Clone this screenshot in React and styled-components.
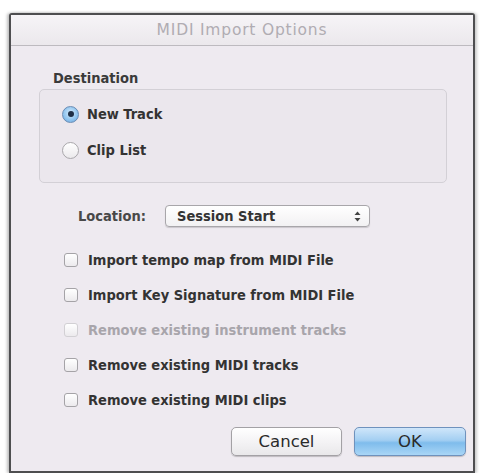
import React from "react";
import styled, { createGlobalStyle } from "styled-components";

const Global = createGlobalStyle`
  html, body { margin: 0; padding: 0; background: #ffffff; }
  body { font-family: "DejaVu Sans Condensed", "DejaVu Sans", sans-serif; }
`;

const Page = styled.div`
  padding: 13px 0 0 9px;
`;

const Window = styled.div`
  width: 462px;
  height: 456px;
  border: 2px solid #4e4e50;
  border-radius: 3px 3px 0 0;
  background: #eeeaf0;
  box-shadow: -2px 0 3px rgba(0,0,0,0.25), 2px 0 3px rgba(0,0,0,0.2);
  display: flex;
  flex-direction: column;
`;

const TitleBar = styled.div`
  height: 30px;
  background: linear-gradient(#f6f4f7, #ebe8ec);
  border-bottom: 1px solid #bdbabf;
  display: flex;
  align-items: center;
  justify-content: center;
  color: #b0acb2;
  font-family: "DejaVu Sans", sans-serif;
  font-size: 15.5px;
  letter-spacing: 0.8px;
`;

const Content = styled.div`
  flex: 1;
  display: flex;
  flex-direction: column;
  padding: 24px 7px 0 28px;
`;

const GroupLabel = styled.div`
  font-size: 14.5px;
  font-weight: bold;
  color: #3a3a3a;
  line-height: 16px;
  height: 16px;
  margin-left: 14px;
  margin-bottom: 3px;
`;

const GroupBox = styled.div`
  width: 408px;
  height: 94px;
  box-sizing: border-box;
  border: 1px solid #d3d0d6;
  border-radius: 5px;
  background: #ebe7ed;
  padding: 14px 0 0 23px;
  display: flex;
  flex-direction: column;
  gap: 16px;
`;

const OptionRow = styled.label`
  display: flex;
  align-items: center;
  height: 20px;
  font-size: 14.5px;
  font-weight: bold;
  color: ${p => (p.disabled ? "#a8a5ab" : "#333")};
  gap: 9px;
`;

const Radio = styled.span`
  width: 17px;
  height: 17px;
  border-radius: 50%;
  box-sizing: border-box;
  margin-left: -1px;
  margin-right: -1px;
  border: 1px solid ${p => (p.checked ? "#6a8cb4" : "#a9a7ab")};
  background: ${p =>
    p.checked
      ? "radial-gradient(circle at 50% 40%, #d4ebfb 0%, #8ec3ee 60%, #6aa6de 100%)"
      : "linear-gradient(#ffffff, #ebe9ec)"};
  display: flex;
  align-items: center;
  justify-content: center;
  &::after {
    content: "";
    width: 6px;
    height: 6px;
    border-radius: 50%;
    background: #1f2f46;
    display: ${p => (p.checked ? "block" : "none")};
  }
`;

const LocationRow = styled.div`
  display: flex;
  align-items: center;
  margin-top: 22px;
  margin-left: 39px;
  height: 22px;
`;

const LocationLabel = styled.span`
  font-size: 14.5px;
  font-weight: bold;
  color: #484848;
  width: 87px;
`;

const Select = styled.div`
  width: 205px;
  height: 22px;
  box-sizing: border-box;
  border: 1px solid #a8a6aa;
  border-radius: 4px;
  background: linear-gradient(#ffffff, #f2f1f3);
  box-shadow: 0 1px 1px rgba(0,0,0,0.15);
  display: flex;
  align-items: center;
  justify-content: space-between;
  padding: 0 8px 0 11px;
  font-size: 14.5px;
  font-weight: bold;
  color: #333;
`;

const Arrows = styled.svg`
  width: 7px;
  height: 11px;
`;

const CheckList = styled.div`
  display: flex;
  flex-direction: column;
  gap: 15px;
  margin-top: 23px;
  margin-left: 25px;
`;

const Checkbox = styled.span`
  width: 14px;
  height: 14px;
  box-sizing: border-box;
  border: 1px solid ${p => (p.disabled ? "#d2d0d4" : "#a5a3a7")};
  border-radius: 3px;
  background: linear-gradient(#ffffff, #eceaed);
  margin-right: 1px;
`;

const ButtonRow = styled.div`
  display: flex;
  justify-content: flex-end;
  gap: 12px;
  margin-top: 17px;
`;

const Button = styled.button`
  width: ${p => p.w}px;
  height: 29px;
  border-radius: 5px;
  font-family: "DejaVu Sans", sans-serif;
  font-size: 16.5px;
  color: #2a2a2a;
  border: 1px solid ${p => (p.primary ? "#6f92bd" : "#a3a1a5")};
  background: ${p =>
    p.primary
      ? "linear-gradient(#cfe6fa 0%, #a4cff2 45%, #7fbcec 55%, #a9d6f6 100%)"
      : "linear-gradient(#ffffff 0%, #f4f3f5 50%, #e9e8ea 100%)"};
  box-shadow: 0 1px 1px rgba(0,0,0,0.2);
  padding: 0;
`;

const options = [
  { text: "Import tempo map from MIDI File" },
  { text: "Import Key Signature from MIDI File" },
  { text: "Remove existing instrument tracks", disabled: true },
  { text: "Remove existing MIDI tracks" },
  { text: "Remove existing MIDI clips" },
];

export default function App() {
  return (
    <>
      <Global />
      <Page>
        <Window>
          <TitleBar>MIDI Import Options</TitleBar>
          <Content>
            <GroupLabel>Destination</GroupLabel>
            <GroupBox>
              <OptionRow>
                <Radio checked />
                New Track
              </OptionRow>
              <OptionRow>
                <Radio />
                Clip List
              </OptionRow>
            </GroupBox>
            <LocationRow>
              <LocationLabel>Location:</LocationLabel>
              <Select>
                Session Start
                <Arrows viewBox="0 0 7 11">
                  <path d="M3.5 0.5 L6.5 4 H0.5 Z" fill="#444" />
                  <path d="M3.5 10.5 L6.5 7 H0.5 Z" fill="#444" />
                </Arrows>
              </Select>
            </LocationRow>
            <CheckList>
              {options.map(o => (
                <OptionRow key={o.text} disabled={o.disabled}>
                  <Checkbox disabled={o.disabled} />
                  {o.text}
                </OptionRow>
              ))}
            </CheckList>
            <ButtonRow>
              <Button w={111}>Cancel</Button>
              <Button w={112} primary>OK</Button>
            </ButtonRow>
          </Content>
        </Window>
      </Page>
    </>
  );
}
